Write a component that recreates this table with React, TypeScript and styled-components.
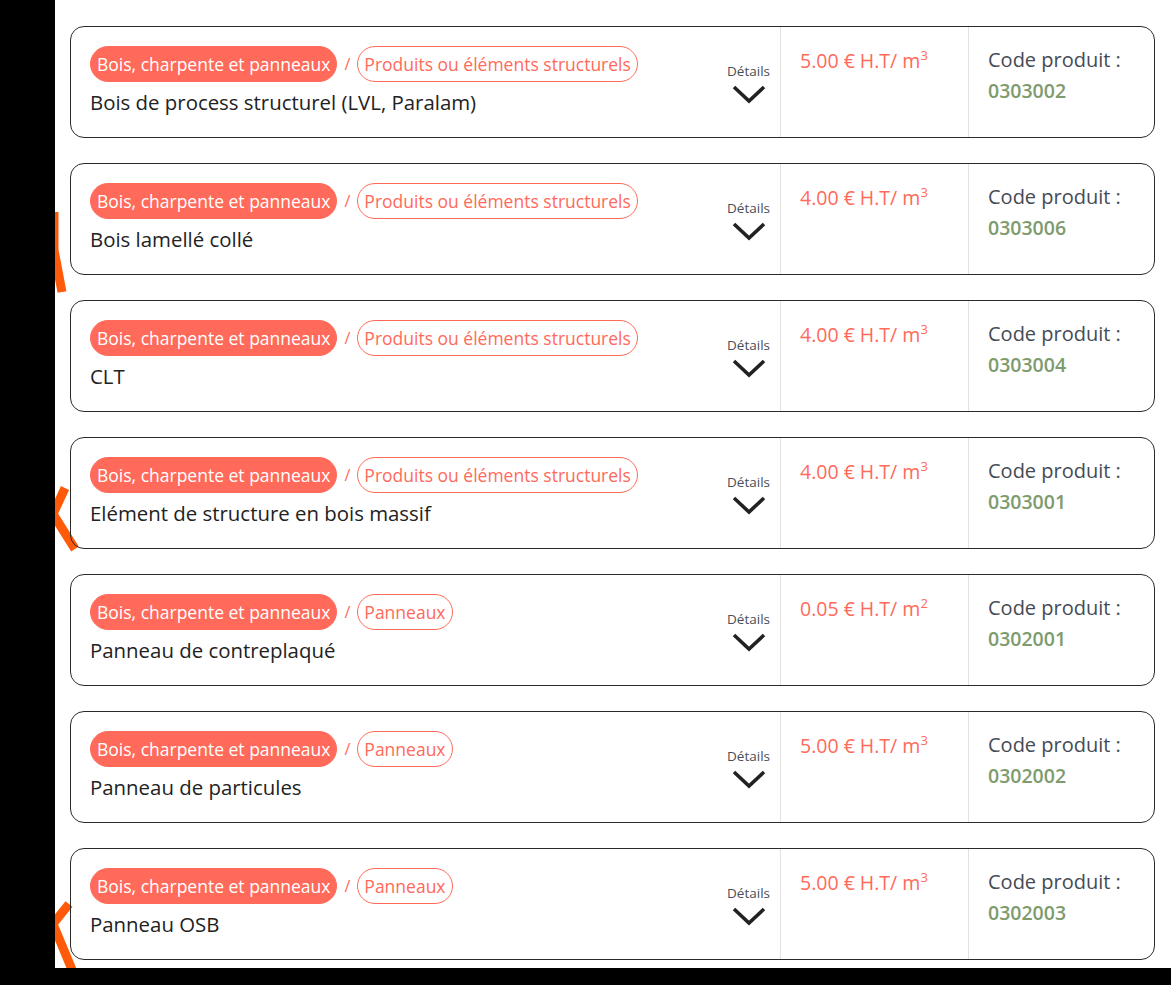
import styled, { createGlobalStyle } from "styled-components";

const GlobalStyle = createGlobalStyle`
  body {
    margin: 0;
    background: #000;
    font-family: "Open Sans", "Liberation Sans", sans-serif;
  }
`;

const Page = styled.div`
  display: flex;
  height: 968px;
  padding-left: 55px;
`;

const Panel = styled.div`
  position: relative;
  flex: 1;
  background: #fff;
  overflow: hidden;
  padding: 26px 16px 0 15px;
  display: flex;
  flex-direction: column;
  gap: 25px;
`;

const Deco = styled.svg`
  position: absolute;
  left: 0;
  top: 0;
  width: 40px;
  height: 968px;
  pointer-events: none;
`;

const Card = styled.div`
  position: relative;
  display: grid;
  grid-template-columns: 1fr 188px 186px;
  height: 112px;
  flex-shrink: 0;
  box-sizing: border-box;
  border: 1px solid #2b2b2b;
  border-radius: 14px;
`;

const MainCol = styled.div`
  display: flex;
  justify-content: space-between;
  padding: 19px 10px 0 19px;
`;

const Info = styled.div`
  display: flex;
  flex-direction: column;
`;

const Tags = styled.div`
  display: flex;
  align-items: center;
  gap: 6px;
`;

const Pill = styled.span<{ $filled?: boolean }>`
  display: inline-flex;
  align-items: center;
  height: 36px;
  box-sizing: border-box;
  padding: 0 6px;
  border-radius: 18px;
  font-size: 17.5px;
  border: 1px solid #ff6a5a;
  background: ${(p) => (p.$filled ? "#ff6a5a" : "transparent")};
  color: ${(p) => (p.$filled ? "#fff" : "#ff6a5a")};
`;

const Slash = styled.span`
  color: #ff6a5a;
  font-size: 16px;
  padding: 0 1px;
`;

const Title = styled.div`
  margin-top: 6px;
  font-size: 20.4px;
  line-height: 28px;
  color: #222;
`;

const Details = styled.div`
  display: flex;
  flex-direction: column;
  align-items: center;
  gap: 5px;
  padding-top: 17px;
  color: #4a4f57;
  font-size: 13.5px;
  line-height: 16px;
`;

const PriceCol = styled.div`
  border-left: 1px solid #e2e2e2;
  padding: 19px 0 0 19px;
  color: #ff6a5a;
  font-size: 19.5px;
  line-height: 30px;
  sup {
    font-size: 13px;
    line-height: 0;
    vertical-align: 8px;
  }
`;

const CodeCol = styled.div`
  border-left: 1px solid #e2e2e2;
  padding: 18px 0 0 19px;
  display: flex;
  flex-direction: column;
`;

const CodeLabel = styled.span`
  font-size: 20px;
  line-height: 30px;
  color: #454b55;
`;

const CodeValue = styled.span`
  font-size: 19.5px;
  line-height: 31px;
  font-weight: 600;
  color: #7e9b6e;
`;

type Item = {
  sub: string;
  title: string;
  price: string;
  unit: string;
  code: string;
};

const items: Item[] = [
  { sub: "Produits ou éléments structurels", title: "Bois de process structurel (LVL, Paralam)", price: "5.00", unit: "3", code: "0303002" },
  { sub: "Produits ou éléments structurels", title: "Bois lamellé collé", price: "4.00", unit: "3", code: "0303006" },
  { sub: "Produits ou éléments structurels", title: "CLT", price: "4.00", unit: "3", code: "0303004" },
  { sub: "Produits ou éléments structurels", title: "Elément de structure en bois massif", price: "4.00", unit: "3", code: "0303001" },
  { sub: "Panneaux", title: "Panneau de contreplaqué", price: "0.05", unit: "2", code: "0302001" },
  { sub: "Panneaux", title: "Panneau de particules", price: "5.00", unit: "3", code: "0302002" },
  { sub: "Panneaux", title: "Panneau OSB", price: "5.00", unit: "3", code: "0302003" },
];

const Chevron = () => (
  <svg width="34" height="20" viewBox="0 0 34 20">
    <polyline points="2,3 17,17 32,3" fill="none" stroke="#222" strokeWidth="3.6" />
  </svg>
);

export default function App() {
  return (
    <>
      <GlobalStyle />
      <Page>
        <Panel>
          <Deco viewBox="0 0 40 968">
            <g fill="none" stroke="#ff5a0a" strokeWidth="9">
              <polyline points="-1,212 -1,250 7,292" />
              <polyline points="10,488 -2,514 20,549" />
              <polyline points="14,904 -2,924 18,972" />
            </g>
          </Deco>
          {items.map((it) => (
            <Card key={it.code}>
              <MainCol>
                <Info>
                  <Tags>
                    <Pill $filled>Bois, charpente et panneaux</Pill>
                    <Slash>/</Slash>
                    <Pill>{it.sub}</Pill>
                  </Tags>
                  <Title>{it.title}</Title>
                </Info>
                <Details>
                  Détails
                  <Chevron />
                </Details>
              </MainCol>
              <PriceCol>
                {it.price} € H.T/ m<sup>{it.unit}</sup>
              </PriceCol>
              <CodeCol>
                <CodeLabel>Code produit :</CodeLabel>
                <CodeValue>{it.code}</CodeValue>
              </CodeCol>
            </Card>
          ))}
        </Panel>
      </Page>
    </>
  );
}
